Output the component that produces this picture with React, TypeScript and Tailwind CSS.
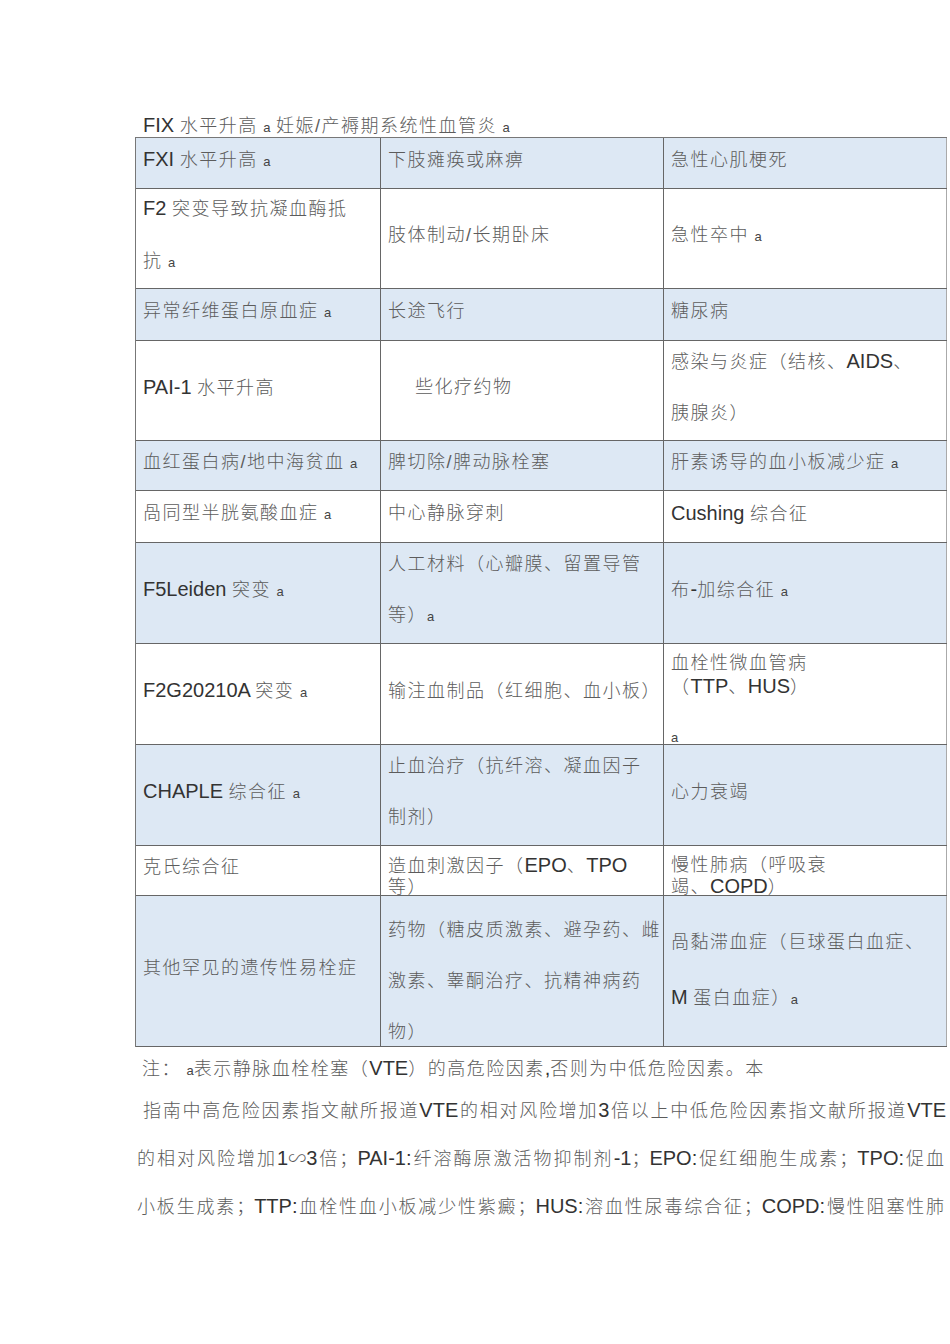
import React from 'react';

type Cell = {
  lines: string[];
  kind?: 'indent' | 'compact' | 'top' | 'wide' | 'spread';
  foot?: string;
};

type Row = {
  h: string;
  blue?: boolean;
  cells: Cell[];
};

const rows: Row[] = [
  {
    h: 'h-[51px]',
    blue: true,
    cells: [{ lines: ['FXI 水平升高 {a}'] }, { lines: ['下肢瘫痪或麻痹'] }, { lines: ['急性心肌梗死'] }],
  },
  {
    h: 'h-[100px]',
    cells: [
      { lines: ['F2 突变导致抗凝血酶抵', '抗 {a}'] },
      { lines: ['肢体制动/长期卧床'] },
      { lines: ['急性卒中 {a}'] },
    ],
  },
  {
    h: 'h-[52px]',
    blue: true,
    cells: [{ lines: ['异常纤维蛋白原血症 {a}'] }, { lines: ['长途飞行'] }, { lines: ['糖尿病'] }],
  },
  {
    h: 'h-[100px]',
    cells: [
      { lines: ['PAI-1 水平升高'] },
      { lines: ['些化疗约物'], kind: 'indent' },
      { lines: ['感染与炎症（结核、AIDS、', '胰腺炎）'] },
    ],
  },
  {
    h: 'h-[50px]',
    blue: true,
    cells: [
      { lines: ['血红蛋白病/地中海贫血 {a}'] },
      { lines: ['脾切除/脾动脉栓塞'] },
      { lines: ['肝素诱导的血小板减少症 {a}'] },
    ],
  },
  {
    h: 'h-[52px]',
    cells: [
      { lines: ['咼同型半胱氨酸血症 {a}'] },
      { lines: ['中心静脉穿刺'] },
      { lines: ['Cushing 综合征'] },
    ],
  },
  {
    h: 'h-[101px]',
    blue: true,
    cells: [
      { lines: ['F5Leiden 突变 {a}'] },
      { lines: ['人工材料（心瓣膜、留置导管', '等）{a}'] },
      { lines: ['布-加综合征 {a}'] },
    ],
  },
  {
    h: 'h-[101px]',
    cells: [
      { lines: ['F2G20210A 突变 {a}'] },
      { lines: ['输注血制品（红细胞、血小板）'] },
      { lines: ['血栓性微血管病', '（TTP、HUS）'], kind: 'top', foot: 'a' },
    ],
  },
  {
    h: 'h-[101px]',
    blue: true,
    cells: [
      { lines: ['CHAPLE 综合征 {a}'] },
      { lines: ['止血治疗（抗纤溶、凝血因子', '制剂）'] },
      { lines: ['心力衰竭'] },
    ],
  },
  {
    h: 'h-[50px]',
    cells: [
      { lines: ['克氏综合征'] },
      { lines: ['造血刺激因子（EPO、TPO', '等）'], kind: 'compact' },
      { lines: ['慢性肺病（呼吸衰', '竭、COPD）'], kind: 'compact' },
    ],
  },
  {
    h: 'h-[151px]',
    blue: true,
    cells: [
      { lines: ['其他罕见的遗传性易栓症'] },
      { lines: ['药物（糖皮质激素、避孕药、雌', '激素、睾酮治疗、抗精神病药', '物）'], kind: 'wide' },
      { lines: ['咼黏滞血症（巨球蛋白血症、', 'M 蛋白血症）{a}'], kind: 'spread' },
    ],
  },
];

// splits a line into latin runs, cjk runs and the small "a" marks
function Rich({ text, tight }: { text: string; tight?: boolean }) {
  const parts = text.split(/(\{a\}|[\x20-\x2E\x30-\x7A]+)/).filter(Boolean);
  return (
    <>
      {parts.map((p, i) => {
        if (p === '{a}') {
          return (
            <span key={i} className="text-[13px] text-[#444]">
              a
            </span>
          );
        }
        if (/^[\x20-\x2E\x30-\x7A]+$/.test(p)) {
          return (
            <span key={i} className="text-[20px] text-[#333]">
              {p}
            </span>
          );
        }
        return (
          <span
            key={i}
            className={
              tight
                ? 'text-[18px] font-light text-[#5c5c5c]'
                : 'text-[18px] font-light tracking-[1.5px] text-[#5c5c5c]'
            }
          >
            {p}
          </span>
        );
      })}
    </>
  );
}

const CellBox = ({ cell, last }: { cell: Cell; last: boolean }) => {
  const border = last ? 'border-r border-[#aaa]' : 'border-r border-[#666]';

  if (cell.kind === 'top') {
    return (
      <div className={`flex h-full flex-col overflow-hidden pl-[7px] pt-[8px] ${border}`}>
        {cell.lines.map((l, i) => (
          <div key={i} className="whitespace-nowrap leading-[23px]">
            <Rich text={l} />
          </div>
        ))}
        <div className="mt-auto text-[13px] leading-[13px] text-[#444]">{cell.foot}</div>
      </div>
    );
  }

  if (cell.kind === 'compact') {
    return (
      <div className={`h-full overflow-hidden pl-[7px] pt-[9px] ${border}`}>
        {cell.lines.map((l, i) => (
          <div key={i} className="whitespace-nowrap leading-[21px]">
            <Rich text={l} />
          </div>
        ))}
      </div>
    );
  }

  let pad = 'pl-[7px] pb-[6px]';
  if (cell.kind === 'indent') pad = 'pl-[34px] pb-[6px]';
  if (cell.kind === 'wide') pad = 'pl-[7px] pt-[20px]';
  if (cell.kind === 'spread') pad = 'pl-[7px]';

  return (
    <div className={`flex h-full flex-col justify-center ${pad} ${border}`}>
      {cell.lines.map((l, i) => (
        <div
          key={i}
          className={`whitespace-nowrap ${cell.kind === 'spread' ? 'leading-[55px]' : 'leading-[50px]'}`}
        >
          <Rich text={l} />
        </div>
      ))}
    </div>
  );
};

export default function App() {
  return (
    <div className="min-h-[1344px] w-[950px] bg-white pt-[114px] [font-family:'Liberation_Sans','Noto_Sans_CJK_SC',sans-serif]">
      <div className="h-[23px] whitespace-nowrap pl-[143px] leading-[23px]">
        <Rich text="FIX 水平升高 {a} 妊娠/产褥期系统性血管炎 {a}" />
      </div>

      <div className="ml-[135px] grid w-[812px] grid-cols-[245px_283px_283px] border-l border-t border-[#777]">
        {rows.map((row, ri) =>
          row.cells.map((cell, ci) => (
            <div
              key={`${ri}-${ci}`}
              className={`${row.h} border-b border-[#666] ${row.blue ? 'bg-[#dde8f4]' : 'bg-white'}`}
            >
              <CellBox cell={cell} last={ci === 2} />
            </div>
          )),
        )}
      </div>

      <div className="ml-[137px] w-[809px]">
        <div className="mt-[6px] h-[30px] whitespace-nowrap pl-[5px] leading-[30px]">
          <Rich text="注： {a}表示静脉血栓栓塞（VTE）的高危险因素,否则为中低危险因素。本" />
        </div>
        <div className="mt-[12px] h-[30px] whitespace-nowrap pl-[6px] leading-[30px] [text-align-last:justify]">
          <Rich tight text="指南中高危险因素指文献所报道VTE的相对风险增加3倍以上中低危险因素指文献所报道VTE" />
        </div>
        <div className="mt-[18px] h-[30px] whitespace-nowrap pr-[2px] leading-[30px] [text-align-last:justify]">
          <Rich tight text="的相对风险增加1∽3倍；PAI-1:纤溶酶原激活物抑制剂-1；EPO:促红细胞生成素；TPO:促血" />
        </div>
        <div className="mt-[18px] h-[30px] whitespace-nowrap pr-[2px] leading-[30px] [text-align-last:justify]">
          <Rich tight text="小板生成素；TTP:血栓性血小板减少性紫癜；HUS:溶血性尿毒综合征；COPD:慢性阻塞性肺" />
        </div>
      </div>
    </div>
  );
}
